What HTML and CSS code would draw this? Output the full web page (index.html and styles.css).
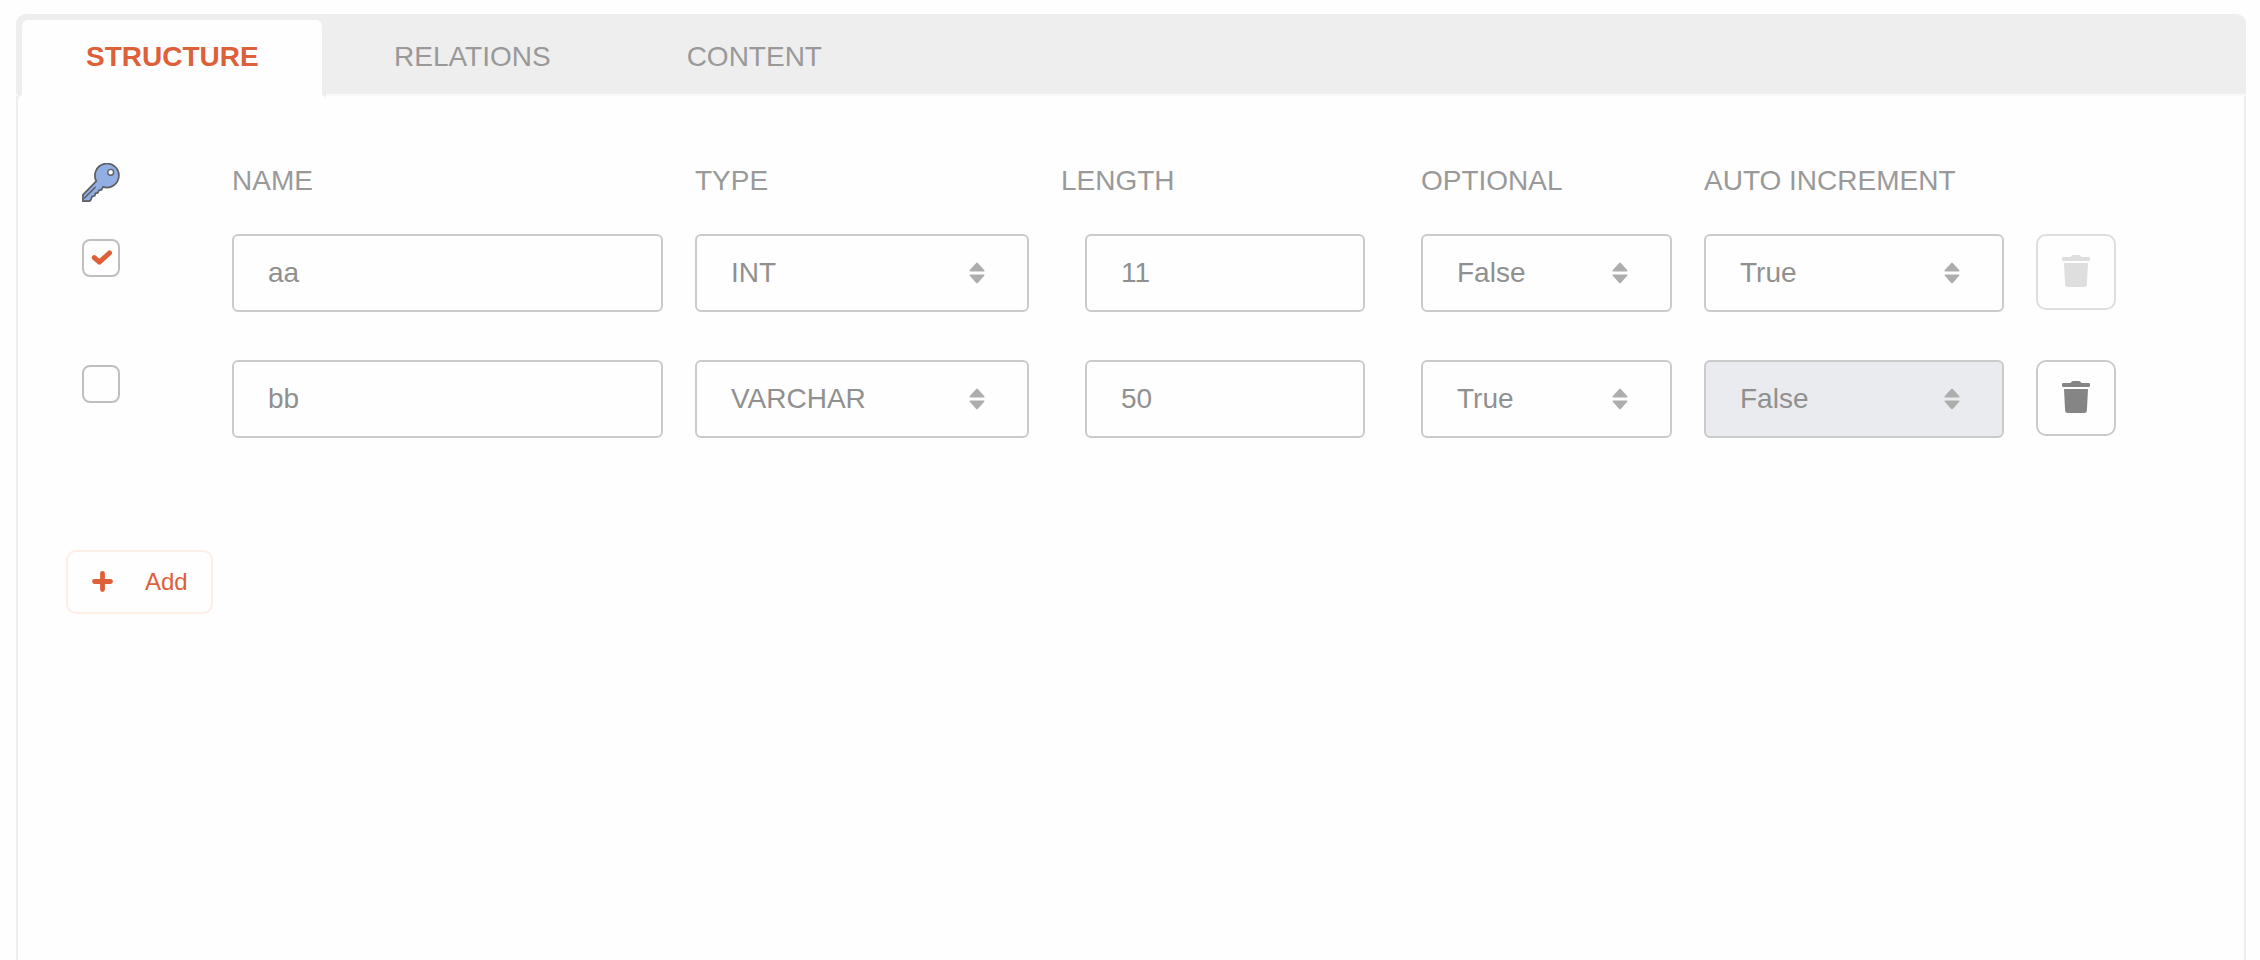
FILE: index.html
```html
<!DOCTYPE html>
<html lang="en">
<head>
<meta charset="utf-8">
<title>Structure</title>
<link rel="stylesheet" href="styles.css">
</head>
<body>
<svg class="defs" width="0" height="0" aria-hidden="true">
  <symbol id="sort" viewBox="0 0 16 22">
    <path d="M1 9.400Q0 9.200.6 8.300L7.200 1Q8 .2 8.800 1L15.400 8.300Q16 9.200 15 9.400ZM1 12.400Q0 12.600.6 13.500L7.200 20.900Q8 21.700 8.800 20.900L15.400 13.500Q16 12.600 15 12.400Z"/>
  </symbol>
  <symbol id="trash" viewBox="0 0 28 32">
    <path d="M1.2 2H8.500L9.800.6Q10.300 0 11 0H17Q17.700 0 18.200.6L19.500 2H26.800Q28 2 28 3.200V4.800Q28 6 26.800 6H1.200Q0 6 0 4.800V3.200Q0 2 1.200 2ZM2 8H26L24.900 29.800Q24.700 32 22.500 32H5.500Q3.300 32 3.100 29.800Z"/>
  </symbol>
</svg>
<main class="panel">
  <nav class="tabs">
    <a class="tab tab-active">STRUCTURE</a>
    <a class="tab">RELATIONS</a>
    <a class="tab">CONTENT</a>
  </nav>
  <section class="content">
    <div class="grid head">
      <span class="key">
        <svg width="40" height="40" viewBox="0 0 40 40">
          <path d="M.9 38.200V31.800L14.300 18.200A12 12 0 1 1 21 23.900L19.500 26.800L16.900 27.300L15.800 29.800L13.400 30.300L12.800 32.800L10 33.600L9 36.600L7.600 38.200Z" fill="#91afe3" stroke="#5c5e60" stroke-width="1.700" stroke-linejoin="round"/>
          <path d="M2 35.500L13.600 24" fill="none" stroke="#5c5e60" stroke-width="1.600"/>
          <circle cx="28.700" cy="9.300" r="2.900" fill="#fff" stroke="#5c5e60" stroke-width="1.400"/>
        </svg>
      </span>
      <span>NAME</span><span>TYPE</span><span>LENGTH</span><span>OPTIONAL</span><span>AUTO INCREMENT</span>
    </div>
    <div class="grid row">
      <span class="check"><svg width="34" height="34" viewBox="0 0 34 34"><path d="M10.300 16.700L15.400 21.200L25.500 12" fill="none" stroke="#dd6039" stroke-width="5" stroke-linecap="round" stroke-linejoin="round"/></svg></span>
      <div class="field name">aa</div>
      <div class="field type">INT<svg class="sort"><use href="#sort"/></svg></div>
      <div class="field length">11</div>
      <div class="field optional">False<svg class="sort"><use href="#sort"/></svg></div>
      <div class="field auto">True<svg class="sort"><use href="#sort"/></svg></div>
      <button class="delete delete-off"><svg class="trash"><use href="#trash"/></svg></button>
    </div>
    <div class="grid row">
      <span class="check"></span>
      <div class="field name">bb</div>
      <div class="field type">VARCHAR<svg class="sort"><use href="#sort"/></svg></div>
      <div class="field length">50</div>
      <div class="field optional">True<svg class="sort"><use href="#sort"/></svg></div>
      <div class="field auto field-off">False<svg class="sort"><use href="#sort"/></svg></div>
      <button class="delete"><svg class="trash"><use href="#trash"/></svg></button>
    </div>
    <button class="add">
      <svg width="21" height="21" viewBox="0 0 21 21"><path d="M10.500 2.500V18.500M2.500 10.500H18.500" stroke="#dd6039" stroke-width="4.800" stroke-linecap="round"/></svg>
      <span>Add</span>
    </button>
  </section>
</main>
</body>
</html>
```
FILE: styles.css
```css
* { box-sizing: border-box; }
html, body { height: 100%; }
body {
  margin: 0;
  padding: 14px 14px 0 16px;
  overflow: hidden;
  background: #fefefe;
  color: #999;
  font: 28px/32px "Liberation Sans", Arial, sans-serif;
}
.defs { display: block; position: absolute; }
.panel {
  height: 100%;
  border: 2px solid #eee;
  border-width: 0 2px;
  border-radius: 10px 10px 0 0;
}
.tabs {
  display: flex;
  gap: 8px;
  height: 82px;
  margin: 0 -2px;
  padding: 6px 6px 0;
  background: #eee;
  border-bottom: 2px solid #f9f9f9;
  border-radius: 10px 10px 0 0;
}
.tab { height: 74px; padding: 21px 64px 0; }
.tab-active {
  position: relative;
  width: 300px;
  height: 78px;
  padding-right: 0;
  background: #fefefe;
  border-radius: 6px 6px 0 0;
  color: #dd6039;
  font-weight: bold;
}
/* small flared feet that join the active tab to the panel */
.tab-active::before,
.tab-active::after {
  content: "";
  position: absolute;
  bottom: 0;
  width: 4px;
  height: 4px;
  background: #eee;
}
.tab-active::before { left: -4px; clip-path: polygon(0 0, 100% 0, 0 100%); }
.tab-active::after { right: -4px; clip-path: polygon(0 0, 100% 0, 100% 100%); }
.content { padding: 67px 0 0 64px; }
.grid {
  display: grid;
  grid-template-columns: 150px 463px 366px 360px 283px 332px 80px;
}
.head { height: 71px; padding-top: 2px; }
.head > .key svg { display: block; margin-top: -2px; }
.row { height: 126px; align-items: start; }
.check {
  width: 38px;
  height: 38px;
  margin-top: 5px;
  border: 2px solid #bfbfbf;
  border-radius: 8px;
}
.check svg { display: block; }
.field {
  display: flex;
  align-items: center;
  justify-content: space-between;
  height: 78px;
  padding: 0 42px 0 34px;
  border: 2px solid #cbcbcb;
  border-radius: 6px;
  color: #909090;
}
.field-off { background: #e9ebef; }
.name { width: 431px; }
.type { width: 334px; }
.length { width: 280px; margin-left: 24px; }
.optional { width: 251px; }
.auto { width: 300px; }
.sort { width: 16px; height: 22px; fill: #adadad; }
.delete {
  display: flex;
  justify-content: center;
  width: 80px;
  height: 76px;
  padding: 19px 0 0;
  background: none;
  border: 2px solid #cbcbcb;
  border-radius: 10px;
}
.trash { width: 28px; height: 32px; fill: #858585; }
.delete-off { border-color: #dedede; }
.delete-off .trash { fill: #dedede; }
.add {
  display: flex;
  align-items: center;
  gap: 32px;
  width: 147px;
  height: 64px;
  margin: 64px 0 0 -16px;
  padding: 0 0 0 24px;
  background: none;
  border: 2px solid #fdeee7;
  border-radius: 10px;
  color: #dd6039;
  font: 24px/28px "Liberation Sans", Arial, sans-serif;
}
.add svg { margin-bottom: 2px; }
```
